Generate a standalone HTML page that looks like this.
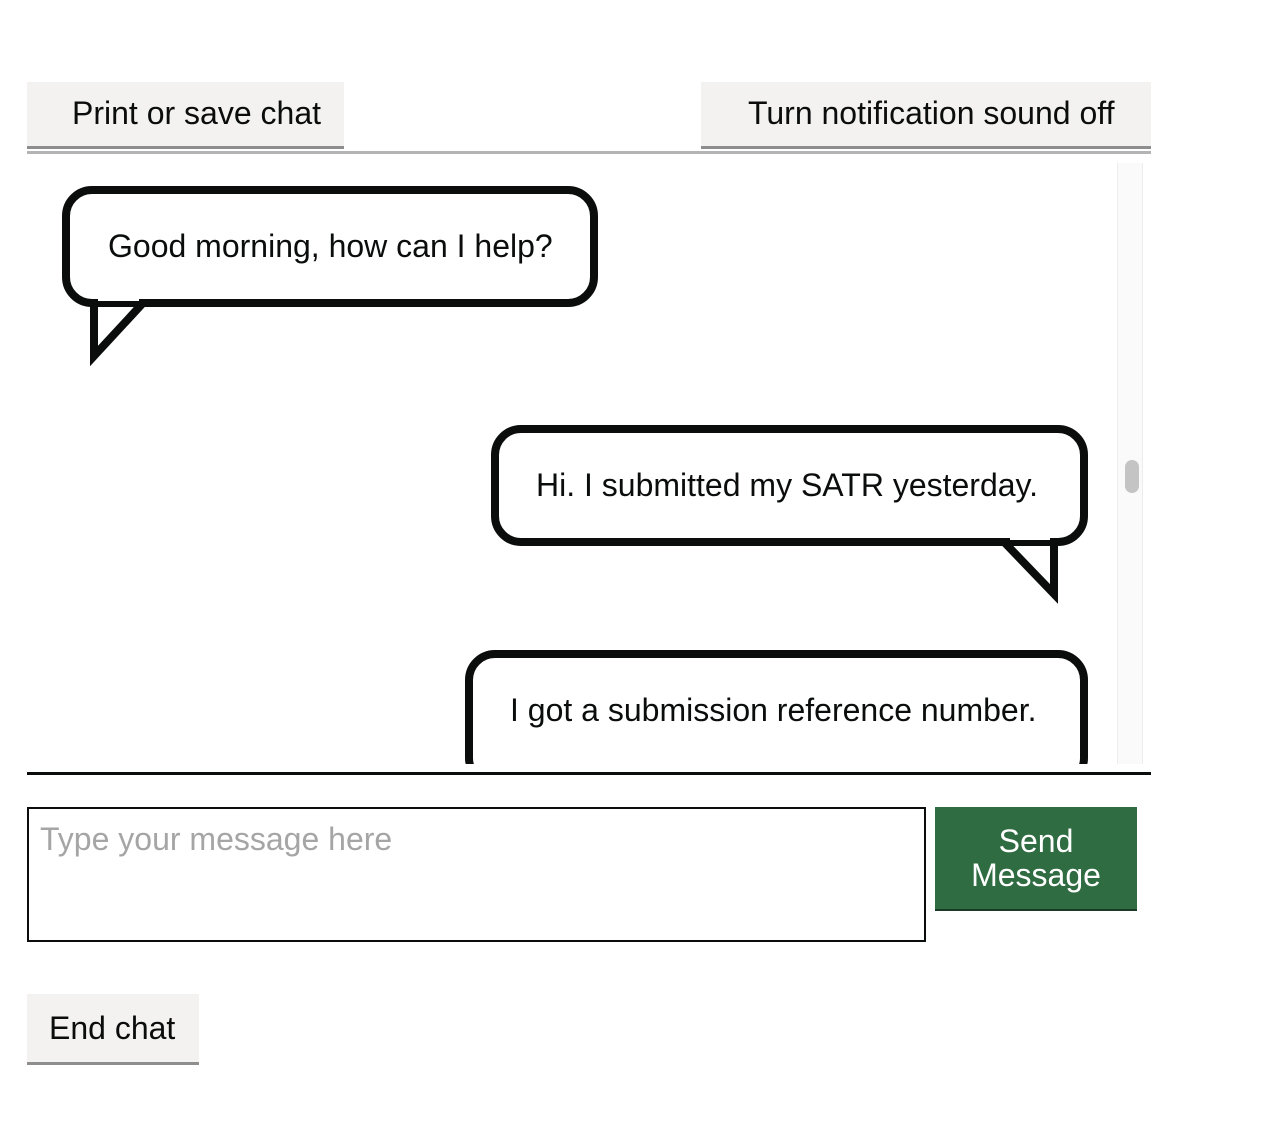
<!DOCTYPE html>
<html><head><meta charset="utf-8"><style>
*{margin:0;padding:0;box-sizing:border-box}
body{width:1280px;height:1140px;background:#fff;position:relative;font-family:"Liberation Sans",Arial,sans-serif;color:#0b0c0c;overflow:hidden}
.a{position:absolute}
.btn{background:#f3f2f1;border-bottom:3px solid #8e8e8e;font-size:32px;line-height:1}
.t{position:absolute;font-size:32px;white-space:nowrap}
</style></head><body>
<div class="a btn" style="left:27px;top:82px;width:317px;height:67px"></div>
<div class="t" style="left:72px;top:95px">Print or save chat</div>
<div class="a btn" style="left:701px;top:82px;width:450px;height:67px"></div>
<div class="t" style="left:748px;top:95px">Turn notification sound off</div>
<div class="a" style="left:27px;top:151px;width:1124px;height:3px;background:#b4b4b4"></div>

<div class="a" style="left:1117px;top:163px;width:26px;height:602px;background:#fafafa;border-left:1px solid #ededed;border-right:1px solid #ededed"></div>
<div class="a" style="left:1125px;top:460px;width:14px;height:33px;background:#c4c4c4;border-radius:7px"></div>

<svg class="a" style="left:0;top:0" width="1280" height="1140">
<g fill="#fff" stroke="#0b0c0c" stroke-width="8" stroke-linejoin="miter">
<path d="M94,303 L94,356 L143,303"/>
<rect x="66" y="190" width="528" height="113" rx="26"/>
<path d="M1004,542 L1054,594 L1054,542"/>
<rect x="495" y="429" width="589" height="113" rx="26"/>
<rect x="469" y="654" width="615" height="130" rx="26"/>
</g>
<g fill="#fff"><rect x="98" y="295" width="41" height="6"/><rect x="1010" y="534" width="40" height="6"/></g>
<rect x="0" y="764" width="1280" height="40" fill="#fff"/>
</svg>
<div class="t" style="left:108px;top:228px">Good morning, how can I help?</div>
<div class="t" style="left:536px;top:467px">Hi. I submitted my SATR yesterday.</div>
<div class="t" style="left:510px;top:692px">I got a submission reference number.</div>

<div class="a" style="left:27px;top:772px;width:1124px;height:3px;background:#0b0c0c"></div>
<div class="a" style="left:27px;top:807px;width:899px;height:135px;border:2px solid #0b0c0c"></div>
<div class="t" style="left:40px;top:821px;color:#a5a5a5">Type your message here</div>
<div class="a" style="left:935px;top:807px;width:202px;height:104px;background:#2f6c41;border-bottom:2px solid #1b3a23;color:#fff;font-size:32px;line-height:34px;text-align:center;padding-top:17px">Send<br>Message</div>
<div class="a btn" style="left:27px;top:994px;width:172px;height:71px"></div>
<div class="t" style="left:49px;top:1010px">End chat</div>
</body></html>
